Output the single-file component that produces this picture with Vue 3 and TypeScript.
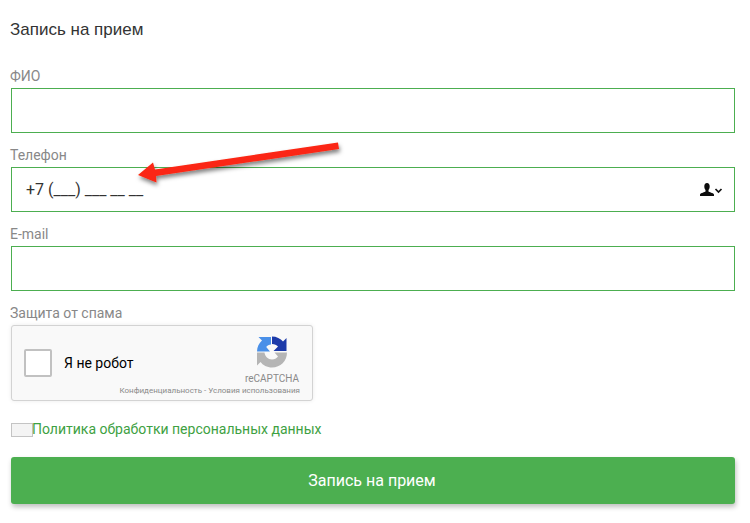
<script setup lang="ts">
const fields = [
  { id: 'name', label: 'ФИО', value: '' },
  { id: 'phone', label: 'Телефон', value: '+7 (___) ___ __ __' },
  { id: 'email', label: 'E-mail', value: '' },
]
</script>

<template>
  <form class="page" @submit.prevent>
    <h1 class="title">Запись на прием</h1>
    <div v-for="f in fields" :key="f.id" class="field">
      <label class="label">{{ f.label }}</label>
      <div class="input">
        <span class="value">{{ f.value }}</span>
        <svg v-if="f.id === 'phone'" class="contact" width="23" height="13" viewBox="0 0 23 13">
          <path d="M7 0C8.800 0 9.700 1.300 9.700 3.200C9.700 4.800 9.200 6.200 8.500 7V8.600C9.300 9.500 13 9.800 14 11.500V13H0V11.500C1 9.800 4.700 9.500 5.500 8.600V7C4.800 6.200 4.300 4.800 4.300 3.200C4.300 1.300 5.200 0 7 0Z" fill="#0c0c0c" />
          <path d="M15.500 6l3 3 3-3" fill="none" stroke="#111" stroke-width="1.700" />
        </svg>
      </div>
    </div>

    <div class="field">
      <label class="label">Защита от спама</label>
      <div class="captcha">
        <span class="captcha-box"></span>
        <span class="captcha-text">Я не робот</span>
        <div class="captcha-brand">
          <svg width="32" height="32" viewBox="0 0 32 32">
            <path d="M1 15.500C1 11 3 7 6 4.500L2.500 1H15V8.500C13 8.700 11.300 9.700 10.200 11L14 15.500Z" fill="#4a90e8" />
            <path d="M16 0.500C20.500 0.500 24.500 2.500 27 5.500L30.500 2V15H17.500L22 10.500C20.700 9.200 18.500 8 16 8Z" fill="#1c3aa9" />
            <path d="M1 16.500H8.500C9 20.500 12 23.500 16 23.500C18.500 23.500 20.500 22.500 22 20.500L18.500 16.500H31C31 25 24.500 31.500 16 31.500C11 31.500 6.800 29 4.500 26L1 29.500Z" fill="#b5b5b5" />
          </svg>
          <span class="brand-name">reCAPTCHA</span>
        </div>
        <span class="captcha-links">Конфиденциальность - Условия использования</span>
      </div>
    </div>

    <div class="policy">
      <span class="policy-box"></span>
      <a class="policy-link">Политика обработки персональных данных</a>
    </div>

    <button class="submit" type="submit">Запись на прием</button>

    <svg class="arrow" width="230" height="60" viewBox="0 0 230 60">
      <defs>
        <filter id="arrow-shadow" x="-10%" y="-30%" width="120%" height="170%">
          <feDropShadow dx="1" dy="3" stdDeviation="2" flood-color="#000" flood-opacity="0.5" />
        </filter>
      </defs>
      <path d="M4 41L19 28.500L21 35.500L204 8.500L205 15L22 42L22.500 48.500Z" fill="#fb2712" filter="url(#arrow-shadow)" />
    </svg>
  </form>
</template>

<style scoped>
.page {
  position: relative;
  box-sizing: border-box;
  width: 750px;
  height: 523px;
  padding: 20px 15px 0 11px;
  font-family: Roboto, "Liberation Sans", sans-serif;
  overflow: hidden;
}
.title {
  margin: 0 0 28px -1px;
  height: 20px;
  font-size: 17px;
  line-height: 20px;
  font-weight: 400;
  color: #333;
  font-family: "Liberation Sans", Roboto, sans-serif;
}
.field {
  margin-bottom: 14px;
}
.label {
  display: block;
  height: 20px;
  margin-left: -1px;
  font-size: 14px;
  line-height: 16px;
  color: #888;
}
.input {
  box-sizing: border-box;
  height: 45px;
  display: flex;
  align-items: center;
  justify-content: space-between;
  padding: 0 11px 0 14px;
  border: 1px solid #4cae50;
  background: #fff;
}
.value {
  font-size: 16px;
  color: #333;
}
.contact {
  display: block;
}
.captcha {
  position: relative;
  box-sizing: border-box;
  width: 302px;
  height: 76px;
  display: flex;
  align-items: center;
  border: 1px solid #d3d3d3;
  border-radius: 3px;
  background: #f9f9f9;
  box-shadow: 0 0 4px rgba(0, 0, 0, 0.08);
}
.captcha-box {
  box-sizing: border-box;
  width: 28px;
  height: 28px;
  margin-left: 12px;
  border: 2px solid #c1c1c1;
  border-radius: 2px;
  background: #fff;
}
.captcha-text {
  margin-left: 12px;
  font-size: 14px;
  color: #000;
}
.captcha-brand {
  position: absolute;
  top: 10px;
  right: 13px;
  display: flex;
  flex-direction: column;
  align-items: center;
}
.brand-name {
  margin-top: 5px;
  font-size: 10px;
  line-height: 12px;
  color: #8a8a8a;
}
.captcha-links {
  position: absolute;
  right: 12px;
  bottom: 4px;
  font-size: 8px;
  line-height: 10px;
  color: #8a8a8a;
  white-space: nowrap;
}
.policy {
  display: flex;
  align-items: flex-start;
  height: 16px;
  margin-top: 20px;
}
.policy-box {
  box-sizing: border-box;
  width: 22px;
  height: 14px;
  margin-top: 2px;
  border: 1px solid #c4c4c4;
  background: #f4f4f4;
}
.policy-link {
  margin-left: -1px;
  font-size: 14px;
  line-height: 16px;
  color: #3ea142;
}
.submit {
  display: block;
  width: 724px;
  height: 47px;
  margin-top: 20px;
  padding: 0 2px 0 0;
  border: 0;
  border-radius: 3px;
  background: #4caf50;
  color: #fff;
  font-family: inherit;
  font-size: 16px;
  box-shadow: 1px 3px 5px rgba(0, 0, 0, 0.25);
}
.arrow {
  position: absolute;
  left: 134px;
  top: 134px;
}
</style>
